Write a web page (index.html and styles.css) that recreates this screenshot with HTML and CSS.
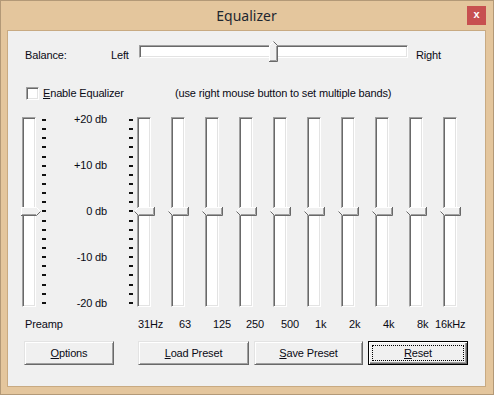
FILE: index.html
```html
<!DOCTYPE html>
<html lang="en">

<head>
  <meta charset="UTF-8">
  <title>Equalizer</title>
  <link rel="stylesheet" href="styles.css">
</head>

<body>
  <!-- thumb shapes, reused by every slider -->
  <svg class="defs" width="0" height="0">
    <symbol id="thumb-left" viewBox="0 0 21 9">
      <polygon points="0,4.5 4.5,0 21,0 21,9 4.5,9" fill="#f0f0f0" />
      <polyline points="0.5,4.5 4.5,0.5 20,0.5" fill="none" stroke="#fff" />
      <polyline points="0.5,4.5 4.5,8.5 20.5,8.5 20.5,0" fill="none" stroke="#696969" />
      <polyline points="5,7.5 19.5,7.5 19.5,1" fill="none" stroke="#a0a0a0" />
    </symbol>
    <symbol id="thumb-right" viewBox="0 0 20 9">
      <polygon points="0,0 15.5,0 20,4.5 15.5,9 0,9" fill="#f0f0f0" />
      <polyline points="0.5,8 0.5,0.5 15.5,0.5 19.5,4.5" fill="none" stroke="#fff" />
      <polyline points="0,8.5 15.5,8.5 19.5,4.5" fill="none" stroke="#696969" />
      <polyline points="1,7.5 15,7.5" fill="none" stroke="#a0a0a0" />
    </symbol>
    <symbol id="thumb-up" viewBox="0 0 9 21">
      <polygon points="0,4.5 4.5,0 9,4.5 9,21 0,21" fill="#f0f0f0" />
      <polyline points="0.5,20 0.5,4.5 4.5,0.5" fill="none" stroke="#fff" />
      <polyline points="4.5,0.5 8.5,4.5 8.5,20.5 0,20.5" fill="none" stroke="#696969" />
      <polyline points="7.5,5 7.5,19.5 1,19.5" fill="none" stroke="#a0a0a0" />
    </symbol>
  </svg>

  <div class="window">
    <div class="titlebar">
      <span class="title">Equalizer</span>
      <button class="close">x</button>
    </div>

    <div class="client">
      <div class="balance">
        <span class="balance__label">Balance:</span>
        <span class="balance__side">Left</span>
        <div class="hslider">
          <svg class="thumb thumb--up" width="9" height="21"><use href="#thumb-up" /></svg>
        </div>
        <span class="balance__right">Right</span>
      </div>

      <div class="enable">
        <span class="checkbox"></span>
        <span class="enable__label"><u>E</u>nable Equalizer</span>
        <span class="enable__hint">(use right mouse button to set multiple bands)</span>
      </div>

      <div class="eq">
        <div class="track track--preamp">
          <svg class="thumb thumb--right" width="20" height="9"><use href="#thumb-right" /></svg>
        </div>
        <div class="ticks ticks--preamp">
          <i></i><i></i><i></i><i></i><i></i><i></i><i></i><i></i><i></i><i></i><i></i>
          <i></i><i></i><i></i><i></i><i></i><i></i><i></i><i></i><i></i><i></i>
        </div>
        <div class="scale">
          <span>+20 db</span>
          <span>+10 db</span>
          <span>0 db</span>
          <span>-10 db</span>
          <span>-20 db</span>
        </div>
        <div class="ticks ticks--band">
          <i></i><i></i><i></i><i></i><i></i><i></i><i></i><i></i><i></i><i></i><i></i>
          <i></i><i></i><i></i><i></i><i></i><i></i><i></i><i></i><i></i><i></i>
        </div>
        <div class="bands">
          <div class="track"><svg class="thumb" width="21" height="9"><use href="#thumb-left" /></svg></div>
          <div class="track"><svg class="thumb" width="21" height="9"><use href="#thumb-left" /></svg></div>
          <div class="track"><svg class="thumb" width="21" height="9"><use href="#thumb-left" /></svg></div>
          <div class="track"><svg class="thumb" width="21" height="9"><use href="#thumb-left" /></svg></div>
          <div class="track"><svg class="thumb" width="21" height="9"><use href="#thumb-left" /></svg></div>
          <div class="track"><svg class="thumb" width="21" height="9"><use href="#thumb-left" /></svg></div>
          <div class="track"><svg class="thumb" width="21" height="9"><use href="#thumb-left" /></svg></div>
          <div class="track"><svg class="thumb" width="21" height="9"><use href="#thumb-left" /></svg></div>
          <div class="track"><svg class="thumb" width="21" height="9"><use href="#thumb-left" /></svg></div>
          <div class="track"><svg class="thumb" width="21" height="9"><use href="#thumb-left" /></svg></div>
        </div>
      </div>

      <div class="labels">
        <span class="labels__preamp">Preamp</span>
        <span class="band-label band-label--first">31Hz</span>
        <span class="band-label">63</span>
        <span class="band-label">125</span>
        <span class="band-label band-label--250">250</span>
        <span class="band-label">500</span>
        <span class="band-label">1k</span>
        <span class="band-label">2k</span>
        <span class="band-label">4k</span>
        <span class="band-label">8k</span>
        <span class="band-label band-label--last">16kHz</span>
      </div>

      <div class="buttons">
        <button class="btn btn--options"><u>O</u>ptions</button>
        <button class="btn btn--load"><u>L</u>oad Preset</button>
        <button class="btn btn--save"><u>S</u>ave Preset</button>
        <button class="btn btn--reset btn--default"><u>R</u>eset</button>
      </div>
    </div>
  </div>
</body>

</html>
```

FILE: styles.css
```css
/* resets */
* {
  box-sizing: border-box;
}

body {
  margin: 0;
  font-family: "Liberation Sans", Arial, sans-serif;
  font-size: 11px;
  line-height: 13px;
  letter-spacing: -0.15px;
  color: #0a0a14;
}

.defs {
  position: absolute;
  width: 0;
  height: 0;
}

/* window frame */
.window {
  width: 494px;
  height: 395px;
  display: flex;
  flex-direction: column;
  background-color: #e4c69d;
  border: 1px solid #b39977;
  padding: 0 7px 7px 6px;
}

.titlebar {
  height: 29px;
  display: grid;
  grid-template-columns: 1fr auto 1fr;
}

.title {
  grid-column: 2;
  font-family: "Noto Sans", sans-serif;
  font-size: 14px;
  line-height: 29px;
  letter-spacing: 0;
  color: #1e2630;
}

.close {
  grid-column: 3;
  justify-self: end;
  align-self: start;
  width: 19px;
  height: 19px;
  margin-top: 5px;
  padding: 0 0 2px;
  border: 0;
  background-color: #c75050;
  color: #fff;
  font-family: "Liberation Sans", sans-serif;
  font-size: 11px;
  font-weight: bold;
  line-height: 17px;
}

.client {
  flex: 1;
  display: flex;
  flex-direction: column;
  background-color: #f0f0f0;
  border: 1px solid #c8aa82;
}

/* balance row */
.balance {
  display: flex;
  align-items: flex-start;
  height: 21px;
  margin-top: 10px;
  padding-left: 17px;
}

.balance__label,
.balance__side,
.balance__right {
  margin-top: 8px;
}

.balance__label {
  width: 86px;
}

.balance__side {
  width: 28px;
}

.balance__right {
  margin-left: 8px;
}

.hslider {
  position: relative;
  width: 269px;
  height: 13px;
  margin-top: 4px;
}

/* sunken trough, classic style */
.hslider,
.track,
.checkbox {
  background-color: #fff;
  border: 1px solid;
  border-color: #a0a0a0 #fff #fff #a0a0a0;
  box-shadow: inset 1px 1px 0 #696969, inset -1px -1px 0 #e3e3e3;
}

.thumb {
  position: absolute;
  display: block;
}

.thumb--up {
  left: 129px;
  top: -5px;
}

/* enable row */
.enable {
  display: flex;
  align-items: center;
  height: 13px;
  margin-top: 25px;
  padding-left: 18px;
}

.checkbox {
  width: 13px;
  height: 13px;
}

.enable__label {
  margin-left: 4px;
  width: 132px;
}

/* sliders */
.eq {
  display: flex;
  height: 190px;
  margin-top: 17px;
  padding-left: 14px;
}

.track {
  position: relative;
  width: 14px;
  height: 190px;
}

.track .thumb {
  left: -4px;
  top: 89px;
}

.track--preamp .thumb {
  left: -2px;
}

.ticks {
  display: flex;
  flex-direction: column;
  justify-content: space-between;
  width: 4px;
  height: 185px;
  margin-top: 2px;
}

.ticks i {
  display: block;
  height: 2px;
  background-color: #111;
}

.ticks--preamp {
  margin-left: 6px;
}

.ticks--band {
  margin-left: 22px;
  margin-right: 4px;
}

.scale {
  display: flex;
  flex-direction: column;
  justify-content: space-between;
  width: 61px;
  margin: -4px 0 -3px;
  text-align: right;
}

.bands {
  display: flex;
  gap: 20px;
}

/* band labels */
.labels {
  display: flex;
  height: 13px;
  margin-top: 11px;
  padding-left: 17px;
}

.labels__preamp {
  width: 113px;
}

.band-label {
  width: 34px;
  padding-left: 7px;
  white-space: nowrap;
}

.band-label--first {
  padding-left: 0;
}

.band-label--250 {
  padding-left: 6px;
}

.band-label--last {
  padding-left: 0;
  text-indent: -9px;
}

/* buttons */
.buttons {
  display: flex;
  height: 24px;
  margin-top: 10px;
  padding-left: 16px;
}

.btn {
  height: 24px;
  padding: 0;
  background-color: #f0f0f0;
  border: 1px solid;
  border-color: #e3e3e3 #696969 #696969 #e3e3e3;
  box-shadow: inset 1px 1px 0 #fff, inset -1px -1px 0 #a0a0a0;
  font-family: inherit;
  font-size: 11px;
  letter-spacing: inherit;
  color: inherit;
  text-align: center;
}

.btn--options {
  width: 90px;
  margin-right: 24px;
}

.btn--load {
  width: 111px;
  margin-right: 5px;
}

.btn--save {
  width: 109px;
  margin-right: 5px;
}

.btn--reset {
  width: 100px;
}

.btn--default {
  border-color: #000;
  box-shadow: inset 1px 1px 0 #fff, inset -1px -1px 0 #696969, inset -2px -2px 0 #a0a0a0;
  outline: 1px dotted #000;
  outline-offset: -5px;
}
```
